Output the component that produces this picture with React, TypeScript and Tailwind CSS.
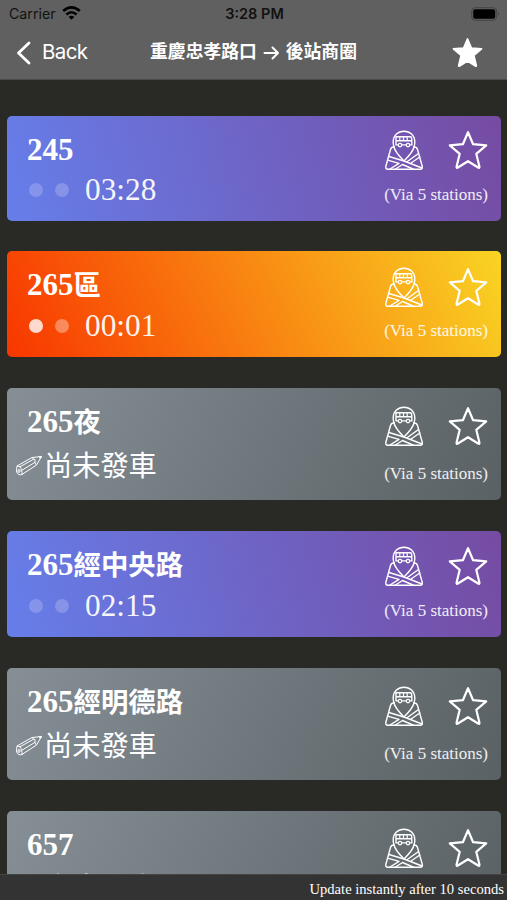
import React from 'react';

type Stop = {
  route: string;
  suffix?: string;
  time?: string;
  active?: boolean;
  card: string;
  icons: string;
};

const blue = 'bg-[linear-gradient(75deg,#667eea_0%,#764ba2_100%)]';
const orange = 'bg-[linear-gradient(65deg,#f83600_0%,#f9d423_100%)]';
const gray = 'bg-[linear-gradient(115deg,#868f96_0%,#596164_100%)]';

const stops: Stop[] = [
  { route: '245', time: '03:28', card: `${blue} h-[105px] mb-[30px]`, icons: 'mt-[14px]' },
  { route: '265', suffix: '區', time: '00:01', active: true, card: `${orange} h-[106px] mb-[31px]`, icons: 'mt-4' },
  { route: '265', suffix: '夜', card: `${gray} h-[112px] mb-[31px]`, icons: 'mt-[18px]' },
  { route: '265', suffix: '經中央路', time: '02:15', card: `${blue} h-[106px] mb-[31px]`, icons: 'mt-[15px]' },
  { route: '265', suffix: '經明德路', card: `${gray} h-[112px] mb-[31px]`, icons: 'mt-[18px]' },
  { route: '657', card: `${gray} h-[112px]`, icons: 'mt-[17px]' },
];

const starPath =
  'M20 2.2 L25.1 14.2 L38.2 15.3 L28.3 23.8 L31.4 36.6 Q31.7 38.4 30.1 37.5 L20 31.2 L9.9 37.5 Q8.3 38.4 8.6 36.6 L11.7 23.8 L1.8 15.3 L14.9 14.2 Z';

const StarIcon: React.FC = () => (
  <svg className="w-10 h-10" viewBox="0 0 40 40" fill="none" stroke="white" strokeWidth="2.2" strokeLinejoin="round">
    <path d={starPath} />
  </svg>
);

const RouteIcon: React.FC = () => (
  <svg className="w-10 h-10" viewBox="0 0 40 40" fill="none" stroke="white" strokeWidth="1.4" strokeLinejoin="round" strokeLinecap="round">
    <path d="M10 17 Q9 14 9.2 11.5 C9.4 5.5 14 1.2 20 1.2 C26 1.2 30.6 5.5 30.8 11.5 Q31 14 30 17" />
    <path d="M10 17 C11 22 15.5 26.5 20 31 C24.5 26.5 29 22 30 17" />
    <path d="M10 17 Q7.2 16.8 6.5 19.5 L1.8 36.5 Q1.4 39.2 3.8 39.2 H36.2 Q38.8 39.2 38.3 36.5 L33.5 19.5 Q32.7 16.8 30 17" />
    <path d="M4.9 26.5 L20 31 L38 38 M3.6 30.2 L15 33.4 M22.7 32 L34.5 23.5 M26.3 33.5 L35.8 27 M15 33.4 L6 39 M18.5 34.5 L11.5 39 M18.5 34.5 L29 39" />
    <path d="M12 6.8 H26.2 Q27.6 6.8 27.7 9 L27.9 14.9 H26 M22 14.9 H18 M14 14.9 H12 V6.8 M12 10.8 H27.8" strokeWidth="1.4" />
    <path d="M15.8 7 V10.5 M19.5 7 V10.5 M23.2 7 V10.5" strokeWidth="1.2" />
    <circle cx="16" cy="15.1" r="1.7" strokeWidth="1.2" />
    <circle cx="24" cy="15.1" r="1.7" strokeWidth="1.2" />
  </svg>
);

const PencilIcon: React.FC = () => (
  <svg className="w-7 h-6 mt-1" viewBox="0 0 28 24" fill="none" stroke="white" strokeWidth="1" strokeLinejoin="round">
    <path d="M2 12 L17 3.5 L26.5 2.5 L21.5 11 L7 20.5 Q2.5 22 1.5 17 Z" />
    <path d="M17 3.5 Q18.5 5 20 5.5 Q19.5 9 21.5 11 M4.5 13 L19 5 M6.5 16.5 L20 8.3 M2 12 Q6.5 12 6.3 16.5 Q7.5 18 7 20.5" />
    <ellipse cx="4" cy="17" rx="1" ry="1.5" />
    <path d="M24.3 2.8 L26.5 2.5 L25.3 4.5 Z" fill="white" />
  </svg>
);

const StopCard: React.FC<{ stop: Stop }> = ({ stop }) => (
  <div className={`flex justify-between shrink-0 rounded-[5px] text-white ${stop.card}`}>
    <div className="flex flex-col">
      <div className={`flex items-baseline h-9 ml-5 text-[31px] leading-9 font-bold ${stop.suffix ? 'mt-[14px]' : 'mt-4'}`}>
        <span>{stop.route}</span>
        {stop.suffix && <span className="font-['Noto_Sans_CJK_TC',sans-serif] text-[27.4px] leading-9">{stop.suffix}</span>}
      </div>
      {stop.time ? (
        <div className={`flex items-center h-9 ml-[22px] ${stop.suffix ? 'mt-[7px]' : 'mt-1'}`}>
          <span className={`size-[14px] rounded-full ${stop.active ? 'bg-white/80' : 'bg-white/20'}`} />
          <span className={`size-[14px] ml-3 rounded-full ${stop.active ? 'bg-white/35' : 'bg-white/20'}`} />
          <span className="ml-4 text-[31.3px] leading-9 text-white/95">{stop.time}</span>
        </div>
      ) : (
        <div className={`flex items-center h-9 ml-2 ${stop.suffix ? 'mt-2' : 'mt-[5px]'}`}>
          <PencilIcon />
          <span className="ml-[1px] font-['Noto_Sans_CJK_TC',sans-serif] text-[28.2px] leading-9">尚未發車</span>
        </div>
      )}
    </div>
    <div className="flex flex-col items-end justify-between mr-[13px] pb-4">
      <div className={`flex gap-6 ${stop.icons}`}>
        <RouteIcon />
        <StarIcon />
      </div>
      <span className="text-[17px] leading-5 whitespace-nowrap text-white/90">(Via 5 stations)</span>
    </div>
  </div>
);

const App: React.FC = () => {
  return (
    <div className="flex flex-col w-full h-screen overflow-hidden bg-[#292a25] font-['Liberation_Serif','Noto_Sans_CJK_TC',serif]">
      <header className="shrink-0 h-20 bg-[#606060] border-b border-[#4b4b4a] font-['Inter','Noto_Sans_CJK_TC',sans-serif]">
        <div className="grid grid-cols-3 items-center h-7 pl-[9px] pr-[7px] text-[14.2px] text-[#111]">
          <div className="flex items-center gap-[6px]">
            <span className="-mt-[1px]">Carrier</span>
            <svg className="w-[19px] h-[14px] -mt-[2px]" viewBox="0 0 19 14" fill="none" stroke="black" strokeWidth="2.6">
              <path d="M1.2 5.1 Q9.5 -2.2 17.8 5.1 M4.4 8.5 Q9.5 4 14.6 8.5" />
              <path d="M6.7 10.9 Q9.5 8.6 12.3 10.9 L9.5 13.7 Z" fill="black" stroke="none" />
            </svg>
          </div>
          <span className="text-center font-semibold whitespace-nowrap text-[14.5px]">3:28 PM</span>
          <svg className="justify-self-end w-[29px] h-[14px] -mt-[1px]" viewBox="0 0 29 14">
            <rect x="0.7" y="0.7" width="25" height="12.6" rx="3.5" fill="none" stroke="#444" strokeWidth="1" />
            <rect x="2.2" y="2.2" width="22" height="9.6" rx="2" fill="black" />
            <path d="M27 5 Q29 7 27 9 Z" fill="#444" />
          </svg>
        </div>
        <div className="grid grid-cols-[120px_1fr_120px] items-center h-[49px] text-white">
          <div className="flex items-center pl-4">
            <svg className="w-[15px] h-6" viewBox="0 0 15 24" fill="none" stroke="white" strokeWidth="2.8" strokeLinecap="round" strokeLinejoin="round">
              <path d="M13 2 L2.5 12 L13 22" />
            </svg>
            <span className="ml-[11px] text-[20.5px] tracking-[-0.6px]">Back</span>
          </div>
          <div className="flex items-center justify-center font-bold text-[17.8px] whitespace-nowrap">
            <span>重慶忠孝路口</span>
            <svg className="w-[17px] h-4 mx-[6px]" viewBox="0 0 17 16" fill="none" stroke="white" strokeWidth="2" strokeLinecap="round" strokeLinejoin="round">
              <path d="M1.5 8 H15 M9.5 2.5 L15 8 L9.5 13.5" />
            </svg>
            <span>後站商圈</span>
          </div>
          <svg className="justify-self-end w-[31px] h-[31px] mr-6" viewBox="0 0 40 40" fill="white" stroke="white" strokeWidth="2" strokeLinejoin="round">
            <path d={starPath} />
          </svg>
        </div>
      </header>
      <main className="flex flex-col flex-1 min-h-0 overflow-hidden pt-9 pl-[7px] pr-[6px]">
        {stops.map((stop, index) => (
          <StopCard key={index} stop={stop} />
        ))}
      </main>
      <footer className="flex items-center justify-end shrink-0 h-[26px] pr-[3px] pt-[2px] bg-[#333] border-t border-[#444] text-white">
        <span className="text-[14.6px] leading-5">Update instantly after 10 seconds</span>
      </footer>
    </div>
  );
};

export default App;
